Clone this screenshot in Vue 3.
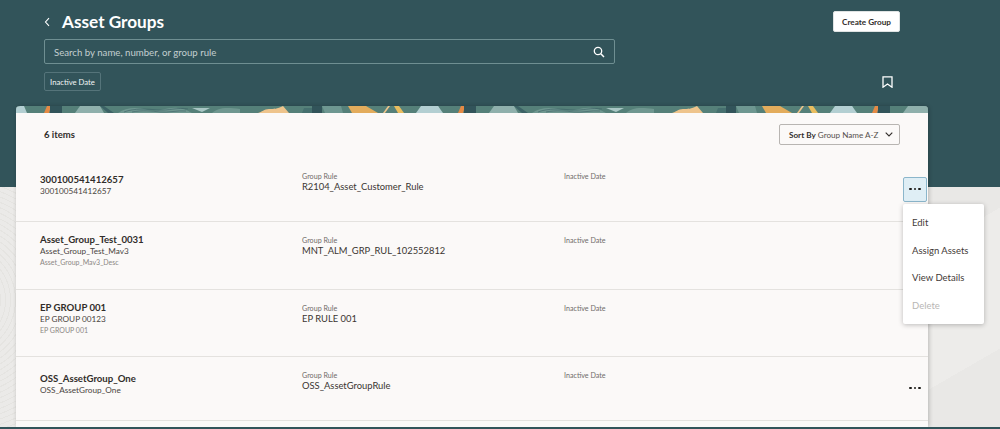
<script setup>
const rows = [
    {name: "300100541412657", sub: "300100541412657", desc: "", rule: "R2104_Asset_Customer_Rule", open: true},
    {name: "Asset_Group_Test_0031", sub: "Asset_Group_Test_Mav3", desc: "Asset_Group_Mav3_Desc", rule: "MNT_ALM_GRP_RUL_102552812"},
    {name: "EP GROUP 001", sub: "EP GROUP 00123", desc: "EP GROUP 001", rule: "EP RULE 001"},
    {name: "OSS_AssetGroup_One", sub: "OSS_AssetGroup_One", desc: "", rule: "OSS_AssetGroupRule"}
];
const menuItems = [
    {label: "Edit"},
    {label: "Assign Assets"},
    {label: "View Details"},
    {label: "Delete", disabled: true}
];
</script>

<template>
    <div class="page">
        <div class="main">
            <header class="hero">
                <div class="top-row">
                    <div class="title-wrap">
                        <svg class="back" width="7" height="10" viewBox="0 0 7 10">
                            <path d="M5 1.2 1.5 5 5 8.8" fill="none" stroke="#fff" stroke-width="1.1"/>
                        </svg>
                        <h1>Asset Groups</h1>
                    </div>
                    <button class="create">Create Group</button>
                </div>
                <div class="search">
                    <span>Search by name, number, or group rule</span>
                    <svg width="12" height="12" viewBox="0 0 12 12">
                        <circle cx="5" cy="5" r="3.7" fill="none" stroke="#fff" stroke-width="1.3"/>
                        <path d="M7.8 7.8 11 11" stroke="#fff" stroke-width="1.5"/>
                    </svg>
                </div>
                <div class="filter-row">
                    <button class="chip">Inactive Date</button>
                    <svg class="bookmark" width="11" height="12" viewBox="0 0 11 12">
                        <path d="M1 .8h9v10.4L5.5 8 1 11.2z" fill="none" stroke="#fff" stroke-width="1.3"/>
                    </svg>
                </div>
            </header>

            <section class="card">
                <svg class="strip" width="912" height="7" viewBox="0 0 912 7">
                    <rect width="912" height="7" fill="#558079"/>
                    <g id="tile" class="tile">
                        <path d="M0 7V1l4-1h4l3 7z" fill="#b3cfd2"/>
                        <path d="M28 7l3-7h4l-2 7z" fill="#e58a45"/>
                        <rect x="34" width="12" height="7" fill="#32545a"/>
                        <path d="M59 7l5-7h20l4 7z" fill="#8fb0ac"/>
                        <path d="M84 0h4l10 7h-6z" fill="#3c6266"/>
                        <path d="M102 7c8-6 20-6 30-3s20-4 30-2 10 3 14 5z" fill="#6f9790"/>
                        <path d="M108 6c10-4 24-3 34-2s20-3 30-1M116 6c10-2 20-1 28 0s18-2 26-1" fill="none" stroke="#3c6266" stroke-width=".6"/>
                        <path d="M176 2h18l-8 4z" fill="#a9c7c5"/>
                        <path d="M196 7c6-5 12-6 28-4v4z" fill="#6f9790"/>
                        <path d="M242 7c4-1 6-4 11-4s8 0 14-3l6 7z" fill="#eec48c"/>
                        <path d="M288 2h8v5h-10z" fill="#46706f"/>
                        <rect x="296" width="10" height="7" fill="#32545a"/>
                        <path d="M306 0l3 7h18l-2-7z" fill="#6e9791"/>
                        <path d="M332 0h18l12 7h-26z" fill="#e3ac5c"/>
                        <path d="M372 0h2l-5 7h-2z" fill="#eec48c"/>
                        <path d="M378 0h5l5 7h-6z" fill="#e9bd5f"/>
                    </g>
                    <use href="#tile" x="414"/>
                    <use href="#tile" x="828"/>
                    <path d="M400 7l5-7h17l5 7z" fill="#b3cfd2"/>
                    <path d="M814 7l5-7h17l5 7z" fill="#b3cfd2"/>
                </svg>
                <div class="card-head">
                    <span class="count">6 items</span>
                    <button class="sort">
                        <span class="sort-text"><b>Sort By</b> Group Name A-Z</span>
                        <svg width="8" height="5" viewBox="0 0 8 5">
                            <path d="M.7.7 4 4 7.3.7" fill="none" stroke="#312d2a" stroke-width="1.1"/>
                        </svg>
                    </button>
                </div>
                <ul class="list">
                    <li v-for="row in rows" :key="row.name" class="row" :class="{tall: row.desc}">
                        <div class="names">
                            <div class="name">{{ row.name }}</div>
                            <div class="sub">{{ row.sub }}</div>
                            <div v-if="row.desc" class="desc">{{ row.desc }}</div>
                        </div>
                        <div class="field">
                            <div class="label">Group Rule</div>
                            <div class="value">{{ row.rule }}</div>
                        </div>
                        <div class="field">
                            <div class="label">Inactive Date</div>
                        </div>
                        <div class="actions">
                            <button v-if="row.open || row.name.startsWith('OSS')" class="more" :class="{active: row.open}">
                                <i></i><i></i><i></i>
                            </button>
                            <div v-if="row.open" class="menu">
                                <div v-for="item in menuItems" :key="item.label" class="menu-item" :class="{disabled: item.disabled}">
                                    {{ item.label }}
                                </div>
                            </div>
                        </div>
                    </li>
                </ul>
            </section>
        </div>
        <div class="bottom"></div>
    </div>
</template>

<style>
html, body {
    margin: 0;
    overflow: hidden;
}
</style>

<style scoped>
.page {
    display: flex;
    flex-direction: column;
    width: 1000px;
    height: 429px;
    overflow: hidden;
    font-family: Lato, "Noto Sans", sans-serif;
    color: #312d2a;
    background:
        linear-gradient(#32545a 0 187px, transparent 187px),
        linear-gradient(150deg, transparent 0 78%, #edecea 78% 92%, transparent 92%),
        repeating-radial-gradient(circle at -40px 300px, #e5e4e1 0 1px, #ebeae8 1px 5px) 0 0 / 16px 100% no-repeat,
        #e9e8e6;
}

.main {
    flex: 1;
    min-height: 0;
    padding-top: 11px;
}

.hero {
    padding-left: 44px;
}

.top-row {
    display: flex;
    justify-content: space-between;
    align-items: center;
    height: 21px;
    padding-right: 100px;
}

.title-wrap {
    display: flex;
    align-items: center;
    gap: 11px;
}

h1 {
    margin: 0;
    font-size: 17.2px;
    font-weight: 700;
    color: #fff;
}

button {
    font-family: inherit;
    padding: 0;
    cursor: pointer;
}

.create {
    width: 67px;
    height: 21px;
    border: 1px solid #dfe3e3;
    border-radius: 2px;
    background: #fff;
    color: #312d2a;
    font-size: 8.2px;
    font-weight: 700;
}

.search {
    display: flex;
    justify-content: space-between;
    align-items: center;
    box-sizing: border-box;
    width: 571px;
    height: 25px;
    margin-top: 7px;
    padding: 0 9px;
    border: 1px solid #6f8f92;
    border-radius: 2px;
    color: #c3cfd0;
    font-size: 9.65px;
}

.filter-row {
    display: flex;
    justify-content: space-between;
    align-items: center;
    height: 19px;
    margin-top: 8px;
    padding-right: 107px;
}

.chip {
    width: 57px;
    height: 19px;
    border: 1px solid #55747a;
    border-radius: 2px;
    background: transparent;
    color: #f1f4f4;
    font-size: 7.7px;
}

.card {
    width: 912px;
    height: 321px;
    margin: 15px 0 0 16px;
    border-radius: 4px 4px 0 0;
    background: #fbf9f8;
    box-shadow: 1px 0 4px rgba(0, 0, 0, 0.22);
}

.strip {
    display: block;
    border-radius: 4px 4px 0 0;
}

.tile {
    filter: blur(0.4px);
}

.card-head {
    display: flex;
    justify-content: space-between;
    align-items: center;
    box-sizing: border-box;
    height: 45px;
    padding: 0 28px 2px;
}

.count {
    font-size: 9.5px;
    font-weight: 700;
}

.sort {
    display: flex;
    justify-content: space-between;
    align-items: center;
    box-sizing: border-box;
    width: 121px;
    height: 21px;
    padding: 0 6px 0 9px;
    border: 1px solid #b8b5b2;
    border-radius: 2px;
    background: transparent;
    color: #55504c;
    font-size: 8.15px;
}

.sort-text {
    white-space: nowrap;
}

.sort b {
    color: #312d2a;
}

.list {
    margin: 0;
    padding: 0;
    list-style: none;
}

.row {
    display: grid;
    grid-template-columns: 262px 262px 1fr 24px;
    box-sizing: border-box;
    height: 64px;
    padding: 12px 1px 0 24px;
    border-bottom: 1px solid #e4e2df;
}

.row.tall {
    height: 67.5px;
}

.names {
    padding-top: 3.5px;
}

.tall .names {
    padding-top: 0;
}

.name {
    font-size: 9.6px;
    line-height: 12px;
    font-weight: 700;
    color: #312d2a;
}

.sub {
    font-size: 8.2px;
    line-height: 11px;
    color: #4a4541;
}

.desc {
    font-size: 7px;
    line-height: 11px;
    color: #8b8784;
}

.field {
    padding-top: 2px;
}

.label {
    font-size: 7.15px;
    line-height: 9px;
    color: #6f6b68;
}

.value {
    font-size: 9.4px;
    line-height: 11px;
    color: #3a3531;
}

.actions {
    position: relative;
    display: flex;
    align-items: center;
    justify-content: center;
    height: 38px;
}

.more {
    display: flex;
    justify-content: center;
    align-items: center;
    gap: 2px;
    box-sizing: border-box;
    width: 24px;
    height: 25px;
    border: 1px solid transparent;
    border-radius: 2px;
    background: transparent;
}

.more.active {
    border-color: #8bb6cb;
    background: #dfeef5;
}

.more i {
    width: 2.4px;
    height: 2.4px;
    border-radius: 50%;
    background: #1d1b19;
}

.menu {
    position: absolute;
    top: 34px;
    left: 0;
    box-sizing: border-box;
    width: 81px;
    height: 120px;
    padding: 5px 0;
    background: #fff;
    border-radius: 2px;
    box-shadow: 0 1px 5px rgba(0, 0, 0, 0.25);
    z-index: 2;
}

.menu-item {
    height: 27.5px;
    padding-left: 9px;
    font-size: 9.5px;
    line-height: 27.5px;
    color: #3f3a37;
}

.menu-item.disabled {
    color: #b8b6b4;
}

.back {
    display: block;
}

.bottom {
    flex: none;
    height: 2px;
    background: #32545a;
}
</style>
